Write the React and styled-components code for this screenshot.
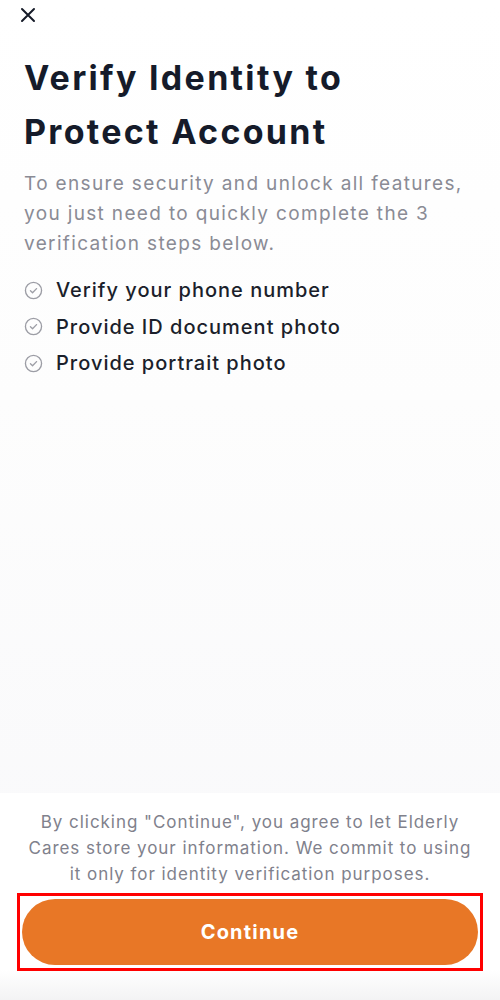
import React from "react";
import styled, { createGlobalStyle } from "styled-components";

const Global = createGlobalStyle`
  html, body { margin: 0; padding: 0; }
  body { font-family: Inter, "Noto Sans", sans-serif; background: #fff; }
  * { box-sizing: border-box; }
`;

const Screen = styled.div`
  width: 500px;
  height: 1000px;
  display: flex;
  flex-direction: column;
  background: linear-gradient(#ffffff 0%, #fdfdfd 40%, #f8f8fa 100%);
  overflow: hidden;
`;

const TopBar = styled.div`
  height: 32px;
  display: flex;
  align-items: center;
  padding: 0 0 0 19px;
`;

const CloseButton = styled.button`
  border: 0;
  background: none;
  padding: 0;
  width: 18px;
  height: 18px;
  display: flex;
  align-items: center;
  justify-content: center;
  margin-top: -2px;
`;

const Main = styled.main`
  flex: 1;
  padding: 19px 24px 0 24px;
  display: flex;
  flex-direction: column;
`;

const Title = styled.h1`
  margin: 0;
  font-size: 34px;
  line-height: 54px;
  font-weight: 700;
  color: #151b2a;
  letter-spacing: 2.3px;
`;

const Lead = styled.p`
  margin: 10px 0 0 0;
  font-size: 19px;
  line-height: 30px;
  color: #8a8b95;
  font-weight: 400;
  letter-spacing: 1.35px;
`;

const Steps = styled.ul`
  list-style: none;
  margin: 17px 0 0 0;
  padding: 0;
  display: flex;
  flex-direction: column;
  gap: 8px;
`;

const Step = styled.li`
  display: flex;
  align-items: center;
  gap: 13px;
  height: 28.5px;
  font-size: 20px;
  font-weight: 500;
  color: #1b1f2b;
  letter-spacing: 1px;
`;

const Footer = styled.footer`
  background: #ffffff;
  padding: 16px 17px 0 17px;
  height: 207px;
  display: flex;
  flex-direction: column;
  align-items: center;
  position: relative;
  &::after {
    content: "";
    position: absolute;
    left: 0;
    right: 0;
    bottom: 0;
    height: 30px;
    background: linear-gradient(#ffffff, #f3f3f4);
  }
`;

const Notice = styled.p`
  margin: 0;
  text-align: center;
  font-size: 17px;
  line-height: 26px;
  color: #80818c;
  width: 454px;
  letter-spacing: 0.95px;
`;

const Frame = styled.div`
  margin-top: 6px;
  width: 466px;
  border: 3px solid #ff0000;
  padding: 3px 2px;
  position: relative;
  z-index: 1;
`;

const PrimaryButton = styled.button`
  width: 100%;
  height: 66px;
  border: 0;
  border-radius: 33px;
  background: #e87726;
  color: #fff;
  font-family: Inter, "Noto Sans", sans-serif;
  font-size: 20px;
  font-weight: 700;
  letter-spacing: 1.2px;
  display: flex;
  align-items: center;
  justify-content: center;
`;

const CheckIcon = () => (
  <svg width="19" height="19" viewBox="0 0 20 20" fill="none">
    <circle cx="10" cy="10" r="8.5" stroke="#9c9da5" strokeWidth="1.4" />
    <path d="M6.8 10.2l2.2 2.1 4.2-4.3" stroke="#9c9da5" strokeWidth="1.4" strokeLinecap="round" strokeLinejoin="round" />
  </svg>
);

const steps = ["Verify your phone number", "Provide ID document photo", "Provide portrait photo"];

export default function App() {
  return (
    <>
      <Global />
      <Screen>
        <TopBar>
          <CloseButton aria-label="Close">
            <svg width="16" height="16" viewBox="0 0 16 16">
              <path d="M2 2l12 12M14 2L2 14" stroke="#161b28" strokeWidth="2" strokeLinecap="round" />
            </svg>
          </CloseButton>
        </TopBar>
        <Main>
          <Title>
            Verify Identity to
            <br />
            Protect Account
          </Title>
          <Lead>
            To ensure security and unlock all features, you just need to quickly complete the 3 verification steps below.
          </Lead>
          <Steps>
            {steps.map((s) => (
              <Step key={s}>
                <CheckIcon />
                {s}
              </Step>
            ))}
          </Steps>
        </Main>
        <Footer>
          <Notice>
            By clicking "Continue", you agree to let Elderly Cares store your information. We commit to using it only for identity verification purposes.
          </Notice>
          <Frame>
            <PrimaryButton>Continue</PrimaryButton>
          </Frame>
        </Footer>
      </Screen>
    </>
  );
}
